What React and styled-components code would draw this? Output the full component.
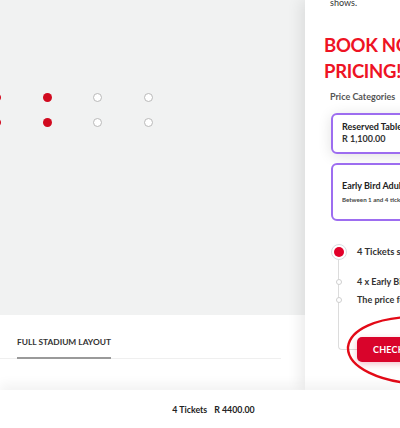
import React from "react";
import styled, { createGlobalStyle } from "styled-components";

const GlobalStyle = createGlobalStyle`
    html, body {
        margin: 0;
        padding: 0;
        background: #ffffff;
    }
    body {
        font-family: "Lato", "Liberation Sans", sans-serif;
        color: #222;
    }
`

const Page = styled.div`
    width: 400px;
    height: 428px;
    overflow: hidden;
    display: flex;
    flex-direction: column;
`

const Main = styled.div`
    display: flex;
    height: 390px;
    flex-shrink: 0;
    overflow: hidden;
`

const LeftPane = styled.div`
    width: 305px;
    flex-shrink: 0;
    display: flex;
    flex-direction: column;
`

const SeatMap = styled.div`
    height: 315px;
    background: #f1f2f2;
    padding-top: 93px;
    box-sizing: border-box;
    overflow: hidden;
`

const SeatRow = styled.div`
    display: flex;
    gap: 41.5px;
    margin-left: -8px;
    margin-bottom: 16px;
`

const Seat = styled.span`
    width: 9px;
    height: 9px;
    border-radius: 50%;
    box-sizing: border-box;
    flex-shrink: 0;
    background: ${p => p.$taken ? "#d10a1f" : "#ffffff"};
    border: ${p => p.$taken ? "none" : "1.4px solid #b9b9b9"};
`

const TabArea = styled.div`
    flex: 1;
    background: #ffffff;
    padding: 21px 24px 0 0;
`

const TabList = styled.div`
    display: flex;
    border-bottom: 1.5px solid #efefef;
`

const Tab = styled.div`
    margin-left: 17px;
    padding-bottom: 9px;
    font-size: 8.4px;
    line-height: 12px;
    font-weight: 700;
    color: #333;
    border-bottom: 2px solid #9a9a9a;
    margin-bottom: -1.5px;
`

const RightPane = styled.aside`
    position: relative;
    width: 360px;
    flex-shrink: 0;
    background: #ffffff;
    box-shadow: -4px 0 14px rgba(0, 0, 0, 0.09);
    padding-left: 19px;
    box-sizing: border-box;
    overflow: hidden;
`

const Intro = styled.p`
    margin: -3px 0 0 6px;
    font-size: 9px;
    line-height: 12px;
    color: #333;
`

const Heading = styled.h2`
    margin: 22.5px 0 0 0;
    font-size: 18.5px;
    line-height: 26px;
    letter-spacing: -0.3px;
    font-weight: 700;
    color: #ee1324;
    white-space: nowrap;
`

const Label = styled.div`
    margin: 7.5px 0 0 6px;
    font-size: 9px;
    line-height: 12px;
    font-weight: 700;
    color: #555;
`

const Card = styled.div`
    margin: ${p => p.$first ? "10px" : "9px"} 0 0 7px;
    border: 2px solid #9d6df0;
    border-radius: 6px;
    padding: ${p => p.$first ? "6px 9px 7px" : "14.5px 9px 15.5px"};
    box-shadow: ${p => p.$first ? "0 2px 14px rgba(0, 0, 0, 0.12)" : "none"};
    background: #ffffff;
`

const CardTitle = styled.div`
    font-size: 9px;
    line-height: 12px;
    font-weight: 700;
    color: #222;
    white-space: nowrap;
`

const CardPrice = styled.div`
    font-size: 9px;
    line-height: 12px;
    font-weight: 700;
    color: #333;
`

const CardNote = styled.div`
    margin-top: 3px;
    font-size: 6.2px;
    line-height: 9px;
    font-weight: 700;
    color: #444;
    white-space: nowrap;
`

const Timeline = styled.div`
    position: relative;
    margin: 23px 0 0 14px;
    padding-left: 19px;

    &::before {
        content: "";
        position: absolute;
        left: 0;
        top: 8px;
        bottom: 12px;
        width: 30px;
        border-left: 1.5px solid #dcdcdc;
        border-bottom: 1.5px solid #dcdcdc;
        border-bottom-left-radius: 4px;
    }
`

const Step = styled.div`
    position: relative;
    font-size: ${p => p.$main ? "9.4px" : "9px"};
    line-height: ${p => p.$main ? "14px" : "12px"};
    padding: ${p => p.$main ? "1px 0" : "0"};
    margin-top: ${p => p.$gap || "0"};
    font-weight: 700;
    color: #333;
    white-space: nowrap;
`

const Marker = styled.span`
    position: absolute;
    top: 50%;
    left: ${p => p.$main ? "-26.25px" : "-21.25px"};
    width: ${p => p.$main ? "16px" : "6px"};
    height: ${p => p.$main ? "16px" : "6px"};
    transform: translateY(-50%);
    border-radius: 50%;
    box-sizing: border-box;
    background: #ffffff;
    border: 1.2px solid ${p => p.$main ? "#d8dde2" : "#cfcfcf"};
    display: flex;
    align-items: center;
    justify-content: center;

    &::after {
        content: "";
        display: ${p => p.$main ? "block" : "none"};
        width: 10px;
        height: 10px;
        border-radius: 50%;
        background: #e2002a;
    }
`

const CheckoutButton = styled.button`
    position: relative;
    margin-top: 31.5px;
    height: 25px;
    width: 140px;
    border: none;
    border-radius: 5px;
    background: #d9042b;
    color: #ffffff;
    font-family: inherit;
    font-size: 9px;
    font-weight: 700;
    letter-spacing: 0.2px;
    text-align: left;
    padding-left: 16px;
    box-shadow: 0 2px 6px rgba(217, 4, 43, 0.25);
`

const Annotation = styled.svg`
    position: absolute;
    left: 33px;
    top: 311px;
    pointer-events: none;
`

const BottomBar = styled.footer`
    flex: 1;
    display: flex;
    align-items: center;
    justify-content: center;
    gap: 7px;
    padding-left: 27px;
    background: #ffffff;
    box-shadow: 0 -6px 12px rgba(0, 0, 0, 0.05);
    position: relative;
    font-size: 8.8px;
    font-weight: 700;
    color: #222;
`

const seatRows = [
    [true, true, false, false],
    [true, true, false, false],
];

const App = () => {
    return (
        <>
            <GlobalStyle />
            <Page>
                <Main>
                    <LeftPane>
                        <SeatMap>
                            {seatRows.map((row, r) => (
                                <SeatRow key={r}>
                                    {row.map((taken, i) => (
                                        <Seat key={i} $taken={taken} />
                                    ))}
                                </SeatRow>
                            ))}
                        </SeatMap>
                        <TabArea>
                            <TabList>
                                <Tab>FULL STADIUM LAYOUT</Tab>
                            </TabList>
                        </TabArea>
                    </LeftPane>

                    <RightPane>
                        <Intro>shows.</Intro>
                        <Heading>BOOK NOW AT EARLY<br />PRICING!</Heading>
                        <Label>Price Categories</Label>

                        <Card $first>
                            <CardTitle>Reserved Table Seating</CardTitle>
                            <CardPrice>R 1,100.00</CardPrice>
                        </Card>

                        <Card>
                            <CardTitle>Early Bird Adult General Admission</CardTitle>
                            <CardNote>Between 1 and 4 tickets per booking</CardNote>
                        </Card>

                        <Timeline>
                            <Step $main>
                                <Marker $main />
                                4 Tickets selected
                            </Step>
                            <Step $gap="16px">
                                <Marker />
                                4 x Early Bird Adult
                            </Step>
                            <Step $gap="5.5px">
                                <Marker />
                                The price for 4 tickets
                            </Step>
                            <CheckoutButton>CHECKOUT</CheckoutButton>
                        </Timeline>

                        <Annotation width="160" height="80" viewBox="0 0 160 80">
                            <path
                                d="M 72 6 C 40 7 12 18 10 36 C 9 56 42 72 85 73 C 120 74 150 62 152 44 C 153 24 120 8 78 5"
                                fill="none"
                                stroke="#e30a17"
                                strokeWidth="2.4"
                                strokeLinecap="round"
                            />
                        </Annotation>
                    </RightPane>
                </Main>

                <BottomBar>
                    <span>4 Tickets</span>
                    <span>R 4400.00</span>
                </BottomBar>
            </Page>
        </>
    )
}

export default App;
